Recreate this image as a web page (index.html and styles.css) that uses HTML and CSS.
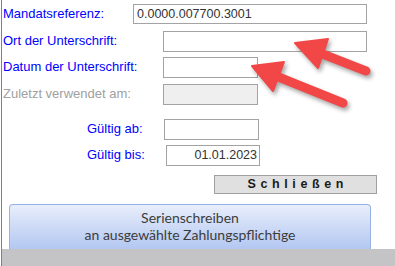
FILE: index.html
```html
<!DOCTYPE html>
<html lang="de">
<head>
<meta charset="utf-8">
<link rel="stylesheet" href="styles.css">
</head>
<body>
<div class="page">
  <div class="row r1">
    <span class="label w130">Mandatsreferenz:</span>
    <div class="field wide">0.0000.007700.3001</div>
  </div>
  <div class="row r2">
    <span class="label w160">Ort der Unterschrift:</span>
    <div class="field wide2"></div>
  </div>
  <div class="row r3">
    <span class="label w160">Datum der Unterschrift:</span>
    <div class="field short"></div>
  </div>
  <div class="row r4">
    <span class="label w160 disabled">Zuletzt verwendet am:</span>
    <div class="field short locked"></div>
  </div>
  <div class="row r5">
    <span class="label w77">Gültig ab:</span>
    <div class="field short"></div>
  </div>
  <div class="row r6">
    <span class="label w78">Gültig bis:</span>
    <div class="field short2 right">01.01.2023</div>
  </div>
  <div class="btnrow">
    <div class="close">Schließen</div>
  </div>
  <div class="bigrow">
    <div class="bigbtn">Serienschreiben<br>an ausgewählte Zahlungspflichtige</div>
  </div>
  <div class="band"></div>
</div>
<svg class="arrows" width="395" height="266" viewBox="0 0 395 266">
  <g class="arrow">
    <line x1="366" y1="71" x2="320" y2="53" stroke="#f24747" stroke-width="9" stroke-linecap="round"/>
    <polygon points="295,43 328,39 318,68" fill="#f24747" stroke="#f24747" stroke-width="2" stroke-linejoin="round"/>
  </g>
  <g class="arrow">
    <line x1="343" y1="103" x2="276" y2="76" stroke="#f24747" stroke-width="9" stroke-linecap="round"/>
    <polygon points="252,66 284,62 273,91" fill="#f24747" stroke="#f24747" stroke-width="2" stroke-linejoin="round"/>
  </g>
</svg>
</body>
</html>
```

FILE: styles.css
```css
html, body {
  margin: 0;
  padding: 0;
}
body {
  width: 395px;
  height: 266px;
  overflow: hidden;
  background: #ffffff;
  font-family: "Liberation Sans", Arial, sans-serif;
  position: relative;
}
.page {
  margin-left: 1px;
  border-left: 1px solid #808080;
  height: 266px;
  display: flex;
  flex-direction: column;
  padding-left: 1px;
  box-sizing: border-box;
}
.row {
  display: flex;
  align-items: center;
  height: 21px;
}
.r1 { margin-top: 4px; height: 20px; }
.r2 { margin-top: 7px; }
.r3 { margin-top: 5px; }
.r4 { margin-top: 6px; }
.r5 { margin-top: 14px; }
.r6 { margin-top: 5px; }
.label {
  font-size: 13px;
  color: #0000ff;
  white-space: nowrap;
  flex: none;
  line-height: 15px;
  margin-top: -2px;
}
.w130 { width: 130px; }
.w160 { width: 160px; }
.w77 { width: 77px; margin-left: 84px; }
.w78 { width: 78px; margin-left: 84px; }
.disabled { color: #a0a0a0; }
.field {
  box-sizing: border-box;
  height: 100%;
  border: 1px solid #a3a3a3;
  background: #ffffff;
  font-size: 12.5px;
  color: #333333;
  line-height: 18px;
  padding: 0 2px 0 3px;
  white-space: nowrap;
  overflow: hidden;
}
.wide { width: 234px; }
.wide2 { width: 204px; }
.short { width: 95px; }
.short2 { width: 94px; margin-left: 1px; }
.locked { background: #efefef; }
.right { text-align: right; }
.btnrow {
  margin-top: 9px;
  display: flex;
  padding-left: 211px;
}
.close {
  box-sizing: border-box;
  width: 163px;
  height: 19px;
  background: #e0e0e0;
  border: 1px solid #a0a0a0;
  font-size: 12.5px;
  font-weight: bold;
  letter-spacing: 4.6px;
  padding-left: 4.6px;
  text-align: center;
  line-height: 17px;
  color: #1a1a1a;
}
.bigrow {
  margin-top: 10px;
  padding-left: 6px;
  display: flex;
}
.bigbtn {
  box-sizing: border-box;
  width: 362px;
  height: 45px;
  border: 1px solid #98b2e4;
  border-bottom: none;
  border-radius: 4px 4px 0 0;
  background: linear-gradient(#e8eefb, #b3c7f1);
  font-family: Lato, "Open Sans", sans-serif;
  font-size: 14px;
  line-height: 17px;
  color: #3c3c3c;
  text-align: center;
  padding-top: 4px;
}
.band {
  height: 17px;
  background: #c4c4c6;
  margin-left: -1px;
}
.arrows {
  position: absolute;
  left: 0;
  top: 0;
  pointer-events: none;
}
.arrow {
  filter: drop-shadow(2px 3px 2px rgba(0, 0, 0, 0.35));
}
```
